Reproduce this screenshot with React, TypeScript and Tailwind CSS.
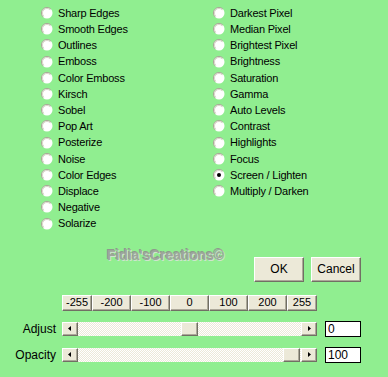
const leftEffects = [
  "Sharp Edges",
  "Smooth Edges",
  "Outlines",
  "Emboss",
  "Color Emboss",
  "Kirsch",
  "Sobel",
  "Pop Art",
  "Posterize",
  "Noise",
  "Color Edges",
  "Displace",
  "Negative",
  "Solarize",
];

const rightEffects = [
  "Darkest Pixel",
  "Median Pixel",
  "Brightest Pixel",
  "Brightness",
  "Saturation",
  "Gamma",
  "Auto Levels",
  "Contrast",
  "Highlights",
  "Focus",
  "Screen / Lighten",
  "Multiply / Darken",
];

const presets = [
  { label: "-255", w: "w-[30px]" },
  { label: "-200", w: "w-[39px]" },
  { label: "-100", w: "w-[39px]" },
  { label: "0", w: "w-[39px]" },
  { label: "100", w: "w-[39px]" },
  { label: "200", w: "w-[39px]" },
  { label: "255", w: "w-[30px]" },
];

const bevel =
  "bg-[#ece9d8] border border-t-white border-l-white border-r-[#716f64] border-b-[#716f64] shadow-[inset_-1px_-1px_0_#aca899]";

export default function App() {
  return (
    <div className="h-[377px] w-[388px] overflow-hidden bg-[#90ee90] font-['Liberation_Sans',Arial,sans-serif] text-[11px] text-black">
      <div className="flex pl-[41px] pt-[5px]">
        <EffectList items={leftEffects} className="w-[172px]" />
        <EffectList items={rightEffects} checked="Screen / Lighten" />
      </div>

      <div className="mt-[8px] flex h-[42px]">
        <span className="ml-[107px] mt-[5px] self-start text-[14px] font-bold leading-[20px] tracking-[-0.1px] text-[#9ea69c] [text-shadow:1px_1px_0_#cfe3cf,-1px_-1px_0_#8f9a8d]">
          Fidia&apos;sCreations©
        </span>
        <div className="ml-auto mr-[27px] flex gap-[7px] self-end">
          <button className={`${bevel} h-[25px] w-[50px] text-[12px]`}>OK</button>
          <button className={`${bevel} h-[25px] w-[50px] text-[12px]`}>Cancel</button>
        </div>
      </div>

      <div className="ml-[62px] mt-[13px] flex">
        {presets.map((p) => (
          <button key={p.label} className={`${bevel} ${p.w} h-[16px] text-[11px] leading-none`}>
            {p.label}
          </button>
        ))}
      </div>

      <div className="mt-[10px] flex flex-col gap-[10px]">
        <SliderRow label="Adjust" value="0" thumb="left-[119px]" />
        <SliderRow label="Opacity" value="100" thumb="left-[221px]" />
      </div>
    </div>
  );
}

function EffectList({
  items,
  checked,
  className = "",
}: {
  items: string[];
  checked?: string;
  className?: string;
}) {
  return (
    <div className={`grid auto-rows-[16.2px] ${className}`}>
      {items.map((label) => (
        <label key={label} className="flex items-center gap-[5px] whitespace-nowrap">
          <Radio checked={label === checked} />
          <span className="tracking-[-0.2px]">{label}</span>
        </label>
      ))}
    </div>
  );
}

function Radio({ checked }: { checked?: boolean }) {
  return (
    <svg width="12" height="12" viewBox="0 0 12 12" className="shrink-0">
      <circle cx="6" cy="6" r="5.5" fill="#fff" />
      <path d="M2.1 9.9 A5.5 5.5 0 0 1 9.9 2.1" fill="none" stroke="#a8a496" strokeWidth="1" />
      <path d="M2.8 9.2 A4.5 4.5 0 0 1 9.2 2.8" fill="none" stroke="#d8d5c8" strokeWidth="1" />
      {checked && <circle cx="6" cy="6" r="2" fill="#000" />}
    </svg>
  );
}

function SliderRow({ label, value, thumb }: { label: string; value: string; thumb: string }) {
  return (
    <div className="flex h-[16px] items-center">
      <span className="w-[56px] text-right text-[12px]">{label}</span>
      <div className="relative ml-[6px] flex h-[14px] w-[255px] justify-between bg-[repeating-conic-gradient(#ece9d8_0%_25%,#ffffff_0%_50%)] bg-size-[2px_2px]">
        <ArrowButton dir="left" />
        <div className={`absolute top-0 h-[14px] w-[17px] ${bevel} ${thumb}`} />
        <ArrowButton dir="right" />
      </div>
      <div className="ml-[8px] flex h-[16px] w-[36px] items-center border border-black bg-white pl-[2px] text-[12px]">
        {value}
      </div>
    </div>
  );
}

function ArrowButton({ dir }: { dir: "left" | "right" }) {
  return (
    <div className={`flex h-[14px] w-[16px] items-center justify-center ${bevel}`}>
      <svg width="4" height="5" viewBox="0 0 4 5">
        {dir === "left" ? <path d="M3 0 L0 2.5 L3 5 Z" fill="#000" /> : <path d="M1 0 L4 2.5 L1 5 Z" fill="#000" />}
      </svg>
    </div>
  );
}
